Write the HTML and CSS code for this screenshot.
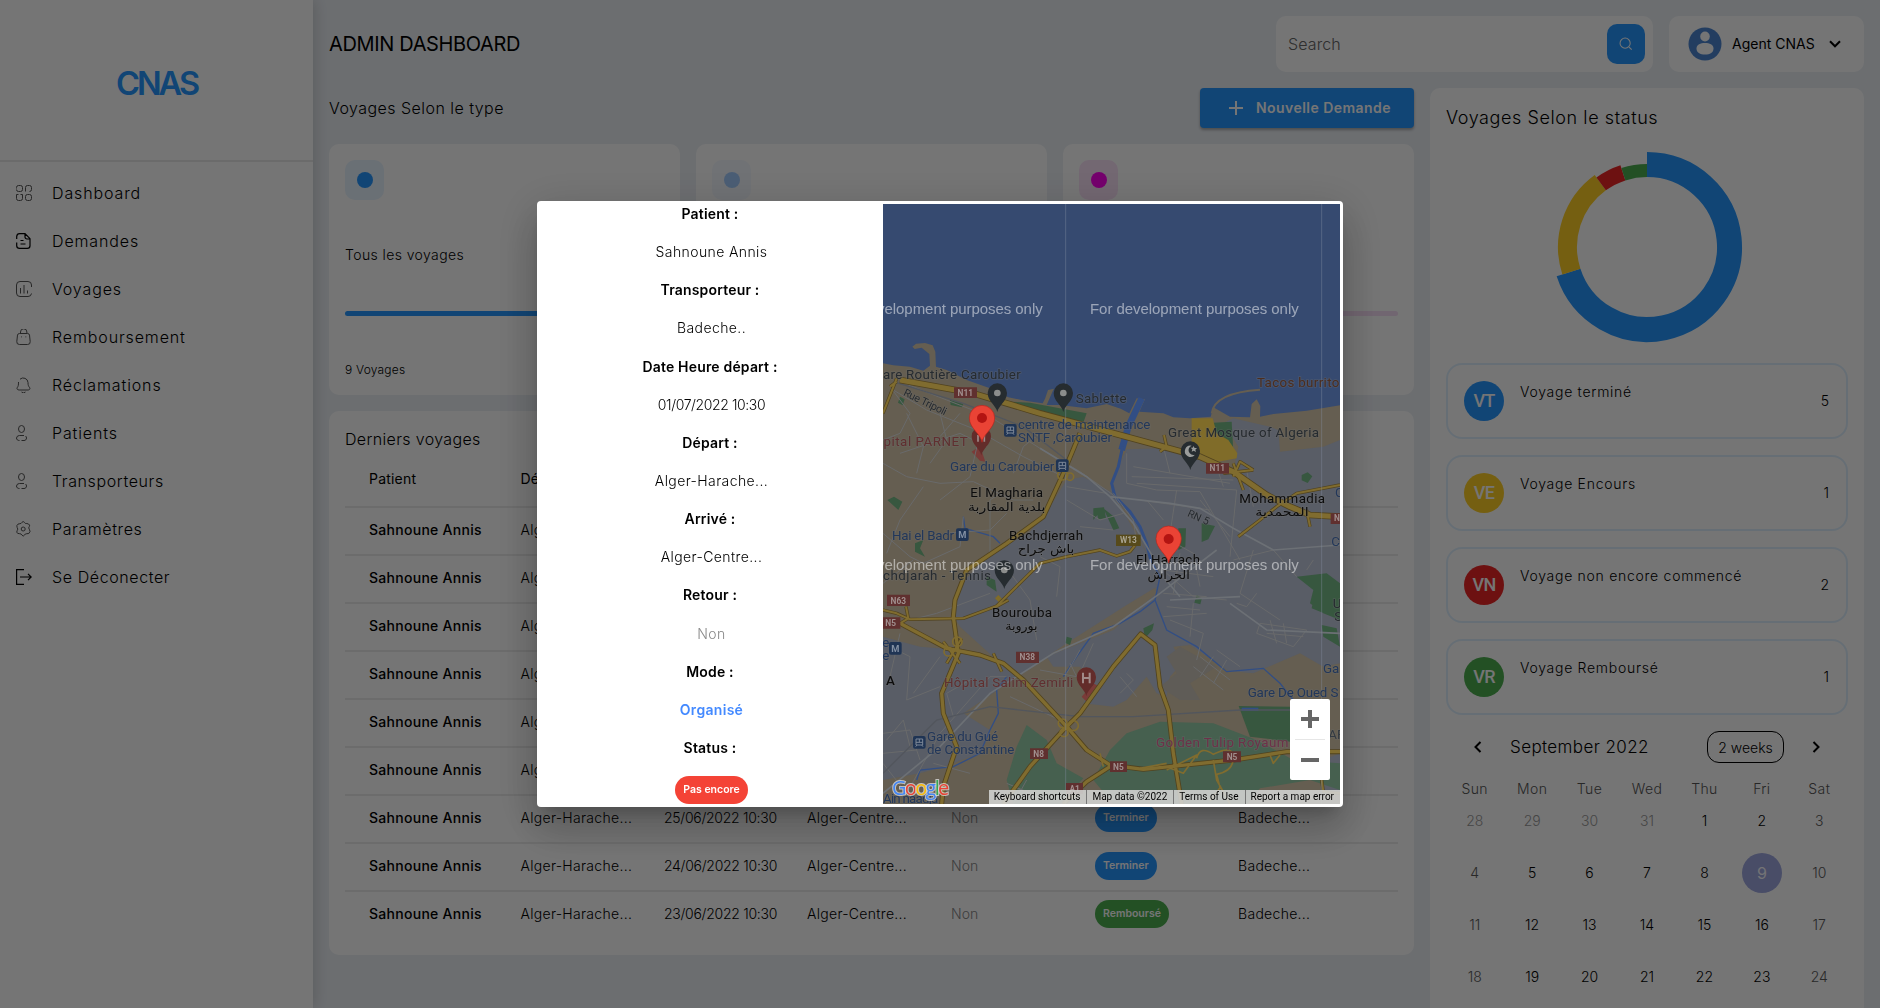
FILE: index.html
```html
<!DOCTYPE html>
<html lang="fr">
<head>
<meta charset="utf-8">
<title>CNAS</title>
<link rel="stylesheet" href="styles.css">
</head>
<body>
<div class="app">
  <aside class="sidebar">
    <div class="brand"><span>CNAS</span></div>
    <nav class="menu">
      <a><svg viewBox="0 0 16 16"><path d="M.5 3.5v-1a2 2 0 0 1 2-2h2a2 2 0 0 1 2 2v2a2 2 0 0 1-2 2h-2a2 2 0 0 1-2-2M9.500 6.500v-4a2 2 0 0 1 2-2h2a2 2 0 0 1 2 2v2a2 2 0 0 1-2 2M2.500 9.500h-2v4a2 2 0 0 0 2 2h2a2 2 0 0 0 2-2v-4h-2M11.500 9.500h2a2 2 0 0 1 2 2v2a2 2 0 0 1-2 2h-2a2 2 0 0 1-2-2v-2a2 2 0 0 1 2-2"/></svg><span>Dashboard</span></a>
      <a><svg class="strong" viewBox="0 0 16 16"><path d="M.7 6V3.500a3 3 0 0 1 3-2.800H9l5 5v7a2.700 2.700 0 0 1-2.700 2.700H3.500A2.800 2.800 0 0 1 .7 12.700V9.500M9 1v3a2 2 0 0 0 2 2h3M4.500 7.500h3M4.500 11h5"/></svg><span>Demandes</span></a>
      <a><svg viewBox="0 0 16 16"><path d="M15.500 6V4A3.500 3.500 0 0 0 12 .5H4A3.500 3.500 0 0 0 .5 4v8A3.500 3.500 0 0 0 4 15.500h8a3.500 3.500 0 0 0 3.500-3M4.500 7v5.500M8 4v8.500M11.500 9.500v3"/></svg><span>Voyages</span></a>
      <a><svg viewBox="0 0 16 16"><path d="M4.500 4V3a3.200 3.200 0 0 1 6.400 0v1M3.500 4.500h8a2 2 0 0 1 2 1.600l.7 6.400a2.700 2.700 0 0 1-2.700 3h-8a2.700 2.700 0 0 1-2.700-3L1.500 6.100a2 2 0 0 1 2-1.600M5.500 7.500v.8M9.800 7.500v.8"/></svg><span>Remboursement</span></a>
      <a><svg viewBox="0 0 16 16"><path d="M4 2.200A4.800 4.800 0 0 1 12 5.500c0 3 .6 3.800 1.700 5.200.7 1-.2 2.300-1.500 2.300h-9C1.500 13 .5 11.800 1.200 10.700 2.400 9 2.500 8 2.500 5M5.500 15a3 3 0 0 0 4 0"/></svg><span>Réclamations</span></a>
      <a><svg viewBox="0 0 16 16"><ellipse cx="5.500" cy="4" rx="3" ry="3.500"/><path d="M8 10.500h-4.500a3 3 0 0 0-3 2.500c0 1.500 1 2.500 3 2.500M5.500 15.500h2.500c1.500 0 2.500-1 2.500-2.500a2.500 2.500 0 0 0-1-2"/></svg><span>Patients</span></a>
      <a class="tight"><svg viewBox="0 0 16 16"><ellipse cx="5.500" cy="4" rx="3" ry="3.500"/><path d="M8 10.500h-4.500a3 3 0 0 0-3 2.500c0 1.500 1 2.500 3 2.500M5.500 15.500h2.500c1.500 0 2.500-1 2.500-2.500a2.500 2.500 0 0 0-1-2"/></svg><span>Transporteurs</span></a>
      <a class="tight"><svg viewBox="0 0 16 16"><circle cx="7.200" cy="8" r="2"/><path d="M5.800 1.500Q7.200-.5 8.600 1.500q.6 1.500 2.200 1L12.500 3q1.800 1 .8 2.600-1.200 1.300 0 2.600 1.800 2.300-.5 4.300l-2 .2q-1.600-.2-2.200 1.300-1.400 2.200-2.800 0-.6-1.500-2.200-1.300l-1.900-.3Q0 11.200 1.200 9.600q1.200-1.500 0-3-1.200-2 .8-3.500l1.800-.4q1.500 0 2-1.200"/></svg><span>Paramètres</span></a>
      <a class="tight"><svg class="strong" viewBox="0 0 16 16"><path d="M8 .6H.6v14.800H8M4 8h11M12 4.800 15.200 8 12 11.200"/></svg><span>Se Déconecter</span></a>
    </nav>
  </aside>

  <main class="main">
    <header class="topbar">
      <h1>ADMIN DASHBOARD</h1>
      <div class="search"><span>Search</span>
        <div class="search-btn"><svg viewBox="0 0 16 16"><circle cx="7" cy="7" r="5.800"/><path d="m11.500 11.500 3 3"/></svg></div>
      </div>
      <div class="profile">
        <svg class="avatar" viewBox="0 0 34 34"><circle cx="17" cy="17" r="16.500" fill="#4c86d2"/><ellipse cx="17" cy="9.500" rx="4.800" ry="5" fill="#fff"/><path d="M8.500 21.500c0-4 4-5.500 8.500-5.500s8.500 1.500 8.500 5.500-3.500 6-8.500 6-8.500-2-8.500-6z" fill="#fff"/></svg>
        <span>Agent CNAS</span>
        <svg class="chev" viewBox="0 0 12 8"><path d="M1 1.300 6 6.300l5-5"/></svg>
      </div>
    </header>

    <div class="columns">
      <section class="left">
        <div class="section-head">
          <h2>Voyages Selon le type</h2>
          <div class="new-btn"><svg viewBox="0 0 14 14"><path d="M7 0v14M0 7h14"/></svg><span>Nouvelle Demande</span></div>
        </div>
        <div class="types">
          <article class="type blue"><i class="tile"></i><h3>Tous les voyages</h3><div class="bar"></div><p>9 Voyages</p></article>
          <article class="type sky"><i class="tile"></i><div class="bar"></div></article>
          <article class="type pink"><i class="tile"></i><div class="bar"></div></article>
        </div>
        <div class="table">
          <h2>Derniers voyages</h2>
          <div class="row head"><span>Patient</span><span>Départ</span><span>Date</span><span>Arrivé</span><span>Retour</span><span>Status</span><span>Transporteur</span></div>
          <div class="row"><b>Sahnoune Annis</b><span>Alger-Harache...</span><span class="date">01/07/2022 10:30</span><span>Alger-Centre...</span><span class="no">Non</span><em>Terminer</em><span>Badeche...</span></div>
          <div class="row"><b>Sahnoune Annis</b><span>Alger-Harache...</span><span class="date">30/06/2022 10:30</span><span>Alger-Centre...</span><span class="no">Non</span><em>Terminer</em><span>Badeche...</span></div>
          <div class="row"><b>Sahnoune Annis</b><span>Alger-Harache...</span><span class="date">29/06/2022 10:30</span><span>Alger-Centre...</span><span class="no">Non</span><em>Terminer</em><span>Badeche...</span></div>
          <div class="row"><b>Sahnoune Annis</b><span>Alger-Harache...</span><span class="date">28/06/2022 10:30</span><span>Alger-Centre...</span><span class="no">Non</span><em>Terminer</em><span>Badeche...</span></div>
          <div class="row"><b>Sahnoune Annis</b><span>Alger-Harache...</span><span class="date">27/06/2022 10:30</span><span>Alger-Centre...</span><span class="no">Non</span><em>Terminer</em><span>Badeche...</span></div>
          <div class="row"><b>Sahnoune Annis</b><span>Alger-Harache...</span><span class="date">26/06/2022 10:30</span><span>Alger-Centre...</span><span class="no">Non</span><em>Terminer</em><span>Badeche...</span></div>
          <div class="row"><b>Sahnoune Annis</b><span>Alger-Harache...</span><span class="date">25/06/2022 10:30</span><span>Alger-Centre...</span><span class="no">Non</span><em>Terminer</em><span>Badeche...</span></div>
          <div class="row"><b>Sahnoune Annis</b><span>Alger-Harache...</span><span class="date">24/06/2022 10:30</span><span>Alger-Centre...</span><span class="no">Non</span><em>Terminer</em><span>Badeche...</span></div>
          <div class="row"><b>Sahnoune Annis</b><span>Alger-Harache...</span><span class="date">23/06/2022 10:30</span><span>Alger-Centre...</span><span class="no">Non</span><em class="green">Remboursé</em><span>Badeche...</span></div>
        </div>
      </section>

      <section class="right">
        <h2>Voyages Selon le status</h2>
        <svg class="donut" viewBox="-100 -100 200 200" fill="none">
          <path stroke="#2697ff" stroke-width="25" d="M0-82.500A82.500 82.500 0 1 1-78.460 25.490"/>
          <path stroke="#ffcf26" stroke-width="19" d="M-75.610 24.570A79.500 79.500 0 0 1-46.730-64.320"/>
          <path stroke="#ee2727" stroke-width="16" d="M-45.840-63.100A78 78 0 0 1-24.100-74.180"/>
          <path stroke="#4caf50" stroke-width="13" d="M-23.640-72.760A76.500 76.500 0 0 1 0-76.500"/>
        </svg>
        <div class="stat"><i class="c1">VT</i><span>Voyage terminé</span><b>5</b></div>
        <div class="stat"><i class="c2">VE</i><span>Voyage Encours</span><b>1</b></div>
        <div class="stat"><i class="c3">VN</i><span>Voyage non encore commencé</span><b>2</b></div>
        <div class="stat"><i class="c4">VR</i><span>Voyage Remboursé</span><b>1</b></div>
        <div class="cal-head">
          <svg viewBox="0 0 8 12"><path d="M6.500 1 1.500 6l5 5"/></svg>
          <span>September 2022</span>
          <button>2 weeks</button>
          <svg viewBox="0 0 8 12"><path d="m1.500 1 5 5-5 5"/></svg>
        </div>
        <div class="week days"><span>Sun</span><span>Mon</span><span>Tue</span><span>Wed</span><span>Thu</span><span>Fri</span><span>Sat</span></div>
        <div class="week first"><s>28</s><s>29</s><s>30</s><s>31</s><span>1</span><span>2</span><u>3</u></div>
        <div class="week"><u>4</u><span>5</span><span>6</span><span>7</span><span>8</span><span class="today">9</span><u>10</u></div>
        <div class="week"><u>11</u><span>12</span><span>13</span><span>14</span><span>15</span><span>16</span><u>17</u></div>
        <div class="week"><u>18</u><span>19</span><span>20</span><span>21</span><span>22</span><span>23</span><u>24</u></div>
      </section>
    </div>
  </main>
</div>

<div class="overlay">
  <div class="modal">
    <div class="details">
      <b>Patient :</b><span>Sahnoune Annis</span>
      <b>Transporteur :</b><span>Badeche..</span>
      <b>Date Heure départ :</b><span class="date">01/07/2022 10:30</span>
      <b>Départ :</b><span>Alger-Harache...</span>
      <b>Arrivé :</b><span>Alger-Centre...</span>
      <b>Retour :</b><span class="no">Non</span>
      <b>Mode :</b><span class="mode">Organisé</span>
      <b>Status :</b><em>Pas encore</em>
    </div>
    <div class="map">
      <!-- Map canvas: three units per pixel -->
      <svg viewBox="9 12 1371 1800">
        <defs>
          <g id="pin"><path d="M0 0C-3-25-38-42-38-73a38 38 0 0 1 76 0C38-42 3-25 0 0z"/></g>
          <g id="poi"><path d="M0 0C-4-20-29-32-29-57a29 29 0 0 1 58 0C29-32 4-20 0 0z"/></g>
          <g id="train"><rect x="-19" y="-19" width="38" height="38" rx="6" fill="#1f3454"/><path d="M-10-10h20v18h-20zM-10 0h20M0-10v10M-7 8l-4 5M7 8l4 5" fill="none" stroke="#7c8797" stroke-width="3"/></g>
        </defs>
        <rect x="9" y="12" width="1371" height="1800" fill="#364a70"/>
        <path fill="#655e51" d="M9 490 40 496 90 500 130 512 150 497 148 462 125 443 104 447 97 440 108 431 135 429 158 436 166 455 168 500 200 510 260 540 330 565 385 592 440 603 488 610 495 596 504 570 522 566 518 574 500 615 540 615 620 625 680 612 722 626 748 640 770 595 795 598 778 635 850 640 880 652 930 655 992 650 1000 622 1050 650 1110 652 1115 612 1130 598 1141 618 1140 650 1180 642 1280 632 1380 616V1812H9z"/>
        <path d="M995 640q8-62 145-71" fill="none" stroke="#655e51" stroke-width="6"/>
        <g fill="#595d66">
          <path d="M740 748 850 745 990 790 1060 815 1075 740 1030 670 1060 655 1170 680 1195 690 1200 755 1330 740 1380 720V1390L1330 1400 1260 1360 1190 1390 1120 1420 1045 1412 930 1335 880 1340 905 1390 870 1430 860 1490 830 1480 800 1430 740 1500 700 1520 610 1510 640 1450 600 1400 520 1400 500 1370 700 1290 830 1180 800 1060 750 950 690 870 715 800z"/>
          <path d="M560 840 610 830 700 880 800 1060 830 1160 740 1215 560 1330 250 1540 330 1590 300 1660 190 1700 120 1720 9 1740V1310L120 1340 240 1350 350 1380 240 1280 215 1240 245 1150 330 1060 450 995 510 920z"/>
          <path d="M900 1340 860 1370 890 1420 840 1460 900 1500 960 1500 930 1450 1010 1400z" fill="#5f5c57"/>
          <path d="M1330 1680 1380 1660V1780H1320z"/>
        </g>
        <g fill="#46604f">
          <path d="M440 1575 500 1620 530 1690 610 1735 540 1812H400L380 1740 410 1640z"/>
          <path d="M690 1650 740 1600 840 1565 1000 1570 1130 1620 1240 1680 1380 1690V1770L1290 1740 1140 1765 1100 1812H700L640 1740z"/>
          <path d="M1076 1518 1230 1520 1232 1625 1110 1610z" fill="#37573f"/>
        </g>
        <g fill="#37573f">
          <path d="M385 605 450 608 620 640 605 682 520 650z"/><path d="M210 600 250 612 246 622 212 615zM60 590l14 8-6 18-14-8z"/>
          <path d="M1000 668 1055 665 1060 755 1020 750z"/><path d="M640 925 672 922 678 955 655 958 652 945 640 960zM670 925 702 950 718 985 700 990z"/>
          <path d="M895 985 918 985 916 1040 895 1050zM965 970l40 8-20 40-20 8z"/><path d="M22 900l20-10 25 15-12 25zM105 1030l25-10-10 25 15 25-30-15z"/>
          <path d="M320 1130 345 1140 350 1175 320 1155zM950 1185l16 8-5 20-18-5zM560 1310l16 5-6 20-14-6zM790 1285l32-15-5 20-22 25z"/>
          <path d="M1250 1130 1340 1120 1380 1150V1260L1330 1240 1290 1210 1300 1170zM1300 1200l60 15-15 30-50-20zM1325 1275 1370 1285 1380 1340 1330 1310z"/>
          <path d="M1265 825l18-8 14 12-14 20-18-8z"/>
        </g>
        <path fill="#806c29" d="M935 655 998 655 1010 700 1045 720 1072 760 1070 775 990 790 960 760 935 745zM345 1195l10-10 18 18-8 12z"/>
        <path fill="#7a3b38" d="M275 755 300 738 316 785 300 782zM605 1490 640 1450 655 1458 620 1505z"/>
        <!-- Rivers -->
        <g fill="none" stroke="#324e84">
          <path stroke-width="20" d="M785 595 745 680 725 750"/>
          <path stroke-width="9" d="M728 740 715 800 695 850 705 890 750 935 780 980 800 1030 812 1080"/>
          <path stroke-width="4" d="M812 1080 840 1130 825 1200 780 1235 720 1270 640 1300 590 1370 550 1430M825 1200 860 1290 950 1340 1040 1415 1150 1405 1200 1450 1240 1500M380 1430 350 1470 355 1540 330 1590 300 1660 220 1700 120 1710 110 1740M250 950 255 985 340 1010 360 1030"/>
          <path stroke-width="10" d="M1085 1528h50"/>
        </g>
        <!-- Side streets -->
        <g fill="none" stroke="#696a6b" stroke-width="3">
          <path d="M30 560 90 640 60 700 9 720M60 545 200 600 330 650 480 745 600 815M40 570 140 630 290 690 430 770 550 830M9 790 80 830 180 850 280 845 400 900 460 900M80 640 130 740 110 820M180 640 200 720 150 790M60 760 240 700 320 740M9 1000 90 1070 130 1090 240 1040 250 950M130 860 60 960 20 1060M200 1000 330 990 380 940M330 1060 330 900 360 880M400 820 430 740 480 700M240 640 180 710M300 700 270 830 180 900M90 1260 170 1240 330 1180M9 1150 100 1080M370 1090 450 1200 470 1320M560 900 660 960 730 940M600 980 700 990M480 1070 540 1100 530 1190M700 880 760 960 770 1030M600 815 700 885 740 950M560 860 680 880"/>
          <path d="M740 760 740 850 830 870 960 875 1080 1080M755 830 1060 840M760 800 1050 850M770 850 1070 870 1050 1070M850 740 870 820M960 900 1050 1010M780 900 990 930M890 870 870 1000M800 900 850 960M1100 810 1120 920M1010 800 1030 860M850 1010 940 1060M860 1120 940 1190 1040 1200M850 1180 980 1190M850 1110 1000 1130M940 1060 960 1160M900 1060 880 1180M1120 1050 1080 1180 1200 1260M1060 1080 1180 1050 1250 1130M1300 1080 1280 1110M870 1260 970 1300 950 1380M850 1250 980 1240M860 1220 960 1230M940 1210 930 1310M1140 1270 1280 1290 1240 1340 1130 1300zM1170 1260 1190 1330M1210 1270 1220 1330M1160 1300 1270 1310M1010 1350 1080 1400M960 1370 1050 1440M940 1400 1030 1470M1000 1370 960 1430M1040 1380 1000 1450M1070 1210 1100 1220 1130 1180M720 1430 770 1490M720 1480 760 1440 740 1420M600 1350 560 1420M640 1330 600 1420M480 1410 590 1430M570 1390 590 1430"/>
          <path d="M9 1330 90 1370 80 1500 180 1460M60 1300 30 1430M180 1370 100 1480M240 1350 120 1310M270 1440 200 1480 220 1550M9 1600 90 1590 120 1680M20 1620 70 1560 90 1640M9 1660 110 1650M9 1690 80 1780 180 1600 330 1430 380 1430M160 1690 270 1720M390 1490 540 1560M380 1750 500 1800M440 1740 400 1812M400 1760 470 1790"/>
        </g>
        <g fill="none" stroke="#6c7075" stroke-width="5">
          <path d="M480 745 620 830 690 890 870 910 960 925 1060 985 1180 1050 1380 1035M690 890 760 970 830 1090 850 1130 900 1190M9 1780 180 1640 330 1480 520 1360 700 1280 840 1180 1010 1050M870 1200 1080 1190M1050 1210 1160 1290 1380 1300"/>
        </g>
        <g fill="none" stroke="#52565d" stroke-width="4"><path d="M40 545 250 610 430 680 560 780M9 1720 170 1560 330 1520 600 1550 760 1550 1080 1530 1230 1530"/></g>
        <!-- Main roads -->
        <g fill="none" stroke-linejoin="round">
          <g stroke="#51431f">
            <path stroke-width="20" d="M60 540 280 580 480 640 720 705 960 770 1060 815 1160 885 1230 920 1290 945 1380 950"/>
            <path stroke-width="15" d="M600 700 550 820 490 950 380 1030 260 1110 225 1200 220 1250 235 1360 185 1480 190 1540 230 1640 190 1760 185 1812M60 1270 200 1345 300 1365 370 1390 430 1440 560 1580 620 1650 690 1695 790 1708 1060 1680 1220 1655 1380 1655M370 1812 450 1700 550 1590 600 1540 700 1400 782 1302 825 1335 840 1460 865 1530 880 1660 905 1812M550 1812 620 1745 690 1700"/>
            <path stroke-width="10" d="M9 1230 50 1240 90 1258 250 1255 350 1218 480 1090 560 1070 660 1050 710 1068 750 1055 770 1030M1075 1010 1140 960 1190 920 1250 880 1380 855M50 535 9 640M30 560 50 545M840 755 860 740 852 705M340 1360 365 1415M60 1270 85 1255 78 1220M1280 930 1290 980M340 1225 385 1200M1325 1740 1330 1775 1380 1780M190 1325 240 1390M245 1315 200 1390M1060 790 1090 870M1030 820 1120 810M1060 830 1080 785 1120 810"/>
          </g>
          <g stroke="#806c2f">
            <path stroke-width="15" d="M60 540 280 580 480 640 720 705 960 770 1060 815 1160 885 1230 920 1290 945 1380 950"/>
            <path stroke-width="10" d="M600 700 550 820 490 950 380 1030 260 1110 225 1200 220 1250 235 1360 185 1480 190 1540 230 1640 190 1760 185 1812M60 1270 200 1345 300 1365 370 1390 430 1440 560 1580 620 1650 690 1695 790 1708 1060 1680 1220 1655 1380 1655M370 1812 450 1700 550 1590 600 1540 700 1400 782 1302 825 1335 840 1460 865 1530 880 1660 905 1812M550 1812 620 1745 690 1700"/>
            <path stroke-width="6" d="M9 1230 50 1240 90 1258 250 1255 350 1218 480 1090 560 1070 660 1050 710 1068 750 1055 770 1030M1075 1010 1140 960 1190 920 1250 880 1380 855M50 535 9 640M30 560 50 545M840 755 860 740 852 705M340 1360 365 1415M60 1270 85 1255 78 1220M1280 930 1290 980M340 1225 385 1200M1325 1740 1330 1775 1380 1780M190 1325 240 1390M245 1315 200 1390M1060 790 1090 870M1030 820 1120 810M1060 830 1080 785 1120 810"/>
            <g stroke-width="5"><circle cx="548" cy="825" r="15"/><circle cx="570" cy="830" r="11"/><circle cx="548" cy="1570" r="13"/><circle cx="580" cy="1577" r="15"/><circle cx="552" cy="1598" r="12"/><circle cx="232" cy="1325" r="14"/><circle cx="205" cy="1355" r="13"/><path d="M950 1675q10-40 50-12 60-30 60 10t-50 50l10 40-30 40M1000 1680 1010 1740 1050 1812M860 1710 950 1665 910 1720 860 1700M1170 1665l10 25 20-25M780 1705 860 1690M660 1660l10 40"/></g>
          </g>
        </g>
        <path d="M557 12V1812M1325 12V1812" stroke="#8690a5" stroke-opacity=".4" stroke-width="3"/>
        <!-- Road shields -->
        <g class="shield">
          <path fill="#60302f" d="M222 562h69v32h-69zM978 789h69v32h-69zM21 1184h69v34H21zM9 1252h52v34H9zM408 1355h69v34h-69zM450 1645h54v32h-54zM690 1684h51v32h-51zM1029 1654h54v33h-54zM558 1749h51v33h-51zM1352 940h28v32h-28z"/>
          <path fill="#574a1b" d="M708 1004h74v34h-74z"/>
          <text x="256" y="587">N11</text><text x="1012" y="814">N11</text><text x="55" y="1211">N63</text><text x="32" y="1278">N5</text><text x="442" y="1381">N38</text><text x="476" y="1671">N8</text><text x="715" y="1709">N5</text><text x="1056" y="1680">N5</text><text x="584" y="1777">A1</text><text x="1371" y="964">N</text><text x="745" y="1030" class="w13">W13</text>
        </g>
        <!-- Places -->
        <g class="lbl">
          <text x="9" y="537" textLength="413">are Routière Caroubier</text>
          <text x="587" y="609" textLength="153">Sablette</text>
          <text x="864" y="712" textLength="453">Great Mosque of Algeria</text>
          <text x="9" y="1140" textLength="324">chdjarah - Tennis</text>
          <text x="68" y="585" class="road" transform="rotate(26 68 585)" textLength="140">Rue Tripoli</text>
          <text x="920" y="948" class="road" transform="rotate(24 920 948)" textLength="68">RN 5</text>
          <text x="1358" y="1224">U</text><text x="1363" y="1262">S</text>
          <g fill="#4c2d1e"><text x="1131" y="561" textLength="247">Tacos burrito</text></g>
        </g>
        <g class="lbl transit">
          <text x="414" y="686" textLength="397">centre de maintenance</text><text x="414" y="725" textLength="282">SNTF ,Caroubier</text>
          <text x="210" y="812" textLength="313">Gare du Caroubier</text>
          <text x="36" y="1019" textLength="186">Hai el Badr</text>
          <text x="141" y="1622" textLength="213">Gare du Gué</text><text x="141" y="1661" textLength="262">de Constantine</text>
          <text x="1103" y="1490" textLength="272">Gare De Oued S</text><text x="1329" y="1418">Ga</text>
          <text x="9" y="1809" textLength="166">Ain naadja</text><text x="7" y="1342">e</text><text x="7" y="1380">e</text><text x="1365" y="890">C</text><text x="1354" y="1037">C</text>
        </g>
        <g class="lbl med">
          <text x="-14" y="737" textLength="277">ôpital PARNET</text>
          <text x="192" y="1461" textLength="388">Hôpital Salim Zemirli</text>
          <text x="828" y="1641" textLength="397" fill="#6d3149">Golden Tulip Royaum</text>
        </g>
        <g class="lbl city">
          <text x="271" y="891" textLength="218">El Magharia</text><text class="ar" x="380" y="932" textLength="232" lengthAdjust="spacingAndGlyphs">بلدية المقاربة</text>
          <text x="387" y="1020" textLength="222">Bachdjerrah</text><text class="ar" x="498" y="1060" textLength="170" lengthAdjust="spacingAndGlyphs">باش جراح</text>
          <text x="1078" y="909" textLength="257">Mohammadia</text><text class="ar" x="1206" y="948" textLength="160" lengthAdjust="spacingAndGlyphs">المحمدية</text>
          <text x="768" y="1092" textLength="192">El Harrach</text><text class="ar" x="866" y="1136" textLength="127" lengthAdjust="spacingAndGlyphs">الحراش</text>
          <text x="336" y="1251" textLength="180">Bourouba</text><text class="ar" x="424" y="1290" textLength="97" lengthAdjust="spacingAndGlyphs">بوروبة</text>
          <text x="18" y="1455" font-weight="500">A</text><text x="1345" y="1616" fill="#333a42">AR</text>
        </g>
        <!-- Place pins -->
        <g fill="#262c30"><use href="#poi" x="352" y="636"/><use href="#poi" x="550" y="636"/><use href="#poi" x="931" y="810"/><use href="#poi" x="373" y="1167"/></g>
        <g fill="#8b8d8c"><circle cx="352" cy="579" r="10"/><circle cx="550" cy="579" r="10"/><circle cx="373" cy="1110" r="10"/></g>
        <path fill="#9a9c9b" d="M935 737a17 17 0 1 0 10 27 14 14 0 1 1-10-27zM940 738l4 6 7 0-5 5 2 7-7-4-6 3 2-7-5-5 6 0z"/>
        <g fill="#632c2a"><use href="#poi" x="304" y="766"/><use href="#poi" x="619" y="1488"/></g>
        <path d="M609 1418v32M629 1418v32M609 1434h20" stroke="#a08a88" stroke-width="6"/><path d="M294 705v20M313 705v20" stroke="#a08a88" stroke-width="5"/>
        <use href="#train" x="391" y="691"/><use href="#train" x="547" y="797"/><use href="#train" x="118" y="1627"/>
        <g class="metro"><rect x="228" y="985" width="38" height="38" rx="6"/><rect x="27" y="1326" width="38" height="38" rx="6"/><text x="247" y="1014">M</text><text x="46" y="1355">M</text></g>
        <!-- Trip markers -->
        <g fill="#ea4335" stroke="#b3261e" stroke-width="2"><use href="#pin" x="306" y="727"/><use href="#pin" x="866" y="1089"/></g>
        <g fill="#b31412"><circle cx="306" cy="654" r="15"/><circle cx="866" cy="1017" r="15"/></g>
        <g class="water">
          <text x="-138" y="343" textLength="626">For development purposes only</text><text x="630" y="343" textLength="626">For development purposes only</text>
          <text x="-138" y="1111" textLength="626">For development purposes only</text><text x="630" y="1111" textLength="626">For development purposes only</text>
        </g>
        <text class="google" x="36" y="1786" textLength="172"><tspan fill="#4285f4">G</tspan><tspan fill="#ea4335">o</tspan><tspan fill="#fbbc04">o</tspan><tspan fill="#4285f4">g</tspan><tspan fill="#34a853">l</tspan><tspan fill="#ea4335">e</tspan></text>
      </svg>
      <div class="zoom"><svg viewBox="0 0 18 18"><path d="M9 0v18M0 9h18"/></svg><hr><svg viewBox="0 0 18 18"><path d="M0 9h18"/></svg></div>
      <div class="legal"><span>Keyboard shortcuts</span><span>Map data ©2022</span><span>Terms of Use</span><span>Report a map error</span></div>
    </div>
  </div>
</div>
</body>
</html>
```
FILE: styles.css
```css
* { box-sizing: border-box; }
body {
  margin: 0;
  width: 1880px;
  height: 1008px;
  overflow: hidden;
  background: #ecf0f5;
  color: #000;
  font: 300 14px/20px Inter, sans-serif;
}
h1, h2, h3, p { margin: 0; font-weight: 300; }
b, i, em, s, u { font-style: normal; text-decoration: none; }
svg { display: block; flex: none; }

.app { display: flex; height: 1008px; }

/* Sidebar */
.sidebar { width: 313px; flex: none; background: #fff; box-shadow: 2px 0 14px rgba(0, 0, 0, .16); position: relative; }
.brand {
  height: 162px;
  padding-top: 8px;
  display: flex;
  align-items: center;
  justify-content: center;
  border-bottom: 2px solid #e9e9e9;
  color: #2697ff;
  font-size: 32.500px;
  font-weight: 600;
  letter-spacing: -3px;
}
.menu { padding-top: 7px; }
.menu a { display: flex; align-items: center; gap: 20px; height: 48px; padding-left: 16px; font-size: 16px; letter-spacing: .87px; }
.menu a.tight { letter-spacing: .6px; }
.menu svg { width: 16px; height: 16px; fill: none; stroke: #555; stroke-width: 1; }
.menu svg.strong { stroke: #000; stroke-width: 1.2; }

/* Top bar */
.main { flex: 1; padding: 16px; }
.topbar { display: flex; height: 56px; align-items: center; }
.topbar h1 { flex: 1; font-size: 20px; font-weight: 400; letter-spacing: -.35px; }
.search, .profile { height: 56px; background: #fff; border-radius: 10px; display: flex; align-items: center; }
.search { width: 377px; padding: 0 8px 0 12px; justify-content: space-between; font-size: 16px; letter-spacing: .1px; color: #666; margin-right: 16px; }
.search-btn { width: 38px; height: 40px; border-radius: 10px; background: #2697ff; display: grid; place-items: center; }
.search-btn svg { width: 14px; height: 14px; fill: none; stroke: #fff; stroke-width: 1.2; }
.profile { width: 195px; padding-left: 19px; font-weight: 400; }
.avatar { width: 34px; height: 34px; margin-right: 10px; }
.profile span { width: 97px; }
.chev { width: 12px; height: 8px; fill: none; stroke: #000; stroke-width: 2; }

.columns { display: flex; gap: 16px; margin-top: 16px; }
.left { flex: 1; }

/* Trip types */
.section-head { height: 40px; display: flex; justify-content: space-between; align-items: center; }
.section-head h2, .table h2 { font-size: 16px; letter-spacing: .46px; }
.new-btn { width: 214px; height: 40px; border-radius: 4px; background: #2697ff; box-shadow: 0 2px 3px rgba(0, 0, 0, .3); color: #fff; display: flex; align-items: center; padding-left: 29px; gap: 13px; font-weight: 600; font-size: 14px; letter-spacing: .45px; }
.new-btn svg { width: 14px; height: 14px; stroke: #fff; stroke-width: 2; }
.types { display: grid; grid-template-columns: repeat(3, 1fr); gap: 16px; margin-top: 16px; }
.type { height: 251px; padding: 16px; border-radius: 10px; background: #fff; }
.tile { display: grid; place-items: center; width: 39px; height: 40px; border-radius: 10px; }
.tile::before { content: ""; width: 16px; height: 16px; border-radius: 50%; }
.type h3 { margin-top: 45px; font-size: 14px; letter-spacing: .4px; }
.bar { height: 5px; border-radius: 5px; margin: 46px 0 44px; }
.tile + .bar { margin-top: 111px; }
.type p { font-size: 12px; letter-spacing: .2px; }
.blue .tile { background: #e6f3ff; }
.blue .tile::before, .blue .bar { background: #2697ff; }
.sky .tile { background: #f4f8fe; }
.sky .tile::before, .sky .bar { background: #a4cdff; }
.pink .tile { background: #fbe2f9; }
.pink .tile::before { background: #f0e; }
.pink .bar { background: #f7def6; }

/* Latest trips */
.table { margin-top: 16px; height: 543.500px; padding: 16px; border-radius: 10px; background: #fff; }
.table h2 { height: 24px; line-height: 24px; letter-spacing: .35px; }
.row { display: grid; grid-template-columns: 151.500px 143.500px 143px 144px 144px 143px 1fr; align-items: center; height: 48px; padding: 0 0 3px 24px; border-top: 2px solid #ececec; letter-spacing: .3px; }
.row.head { height: 55px; padding-bottom: 0; border: 0; font-weight: 400; letter-spacing: .2px; }
.row b { font-weight: 500; letter-spacing: .28px; }
.row .date { letter-spacing: -.28px; }
.no { color: #888; letter-spacing: 0; }
.row em, .details em { justify-self: start; height: 28px; line-height: 28px; padding: 0 8px; border-radius: 14px; background: #2697ff; color: #fff; font-size: 10.500px; font-weight: 600; letter-spacing: 0; }
.row em.green { background: #4caf50; }

/* Status panel */
.right { width: 434px; height: 940px; padding: 16px; border-radius: 10px; background: #fff; }
.right h2 { height: 27px; line-height: 27px; font-size: 18px; letter-spacing: .58px; }
.donut { width: 200px; height: 200px; margin: 16px auto 16px; }
.stat { display: flex; height: 76px; margin-bottom: 16px; padding: 0 17px 0 16px; border: 2px solid rgba(38, 151, 255, .15); border-radius: 16px; align-items: center; }
.stat i { width: 40px; height: 40px; border-radius: 50%; color: #fff; text-align: center; font: 500 18px/40px Roboto, sans-serif; letter-spacing: -.7px; }
.stat span { flex: 1; margin: -18px 0 0 16px; letter-spacing: .72px; }
.stat b { font-weight: 300; }
.c1 { background: #2697ff; }
.c2 { background: #ffcf26; }
.c3 { background: #ee2727; }
.c4 { background: #4caf50; }

.cal-head { display: flex; height: 32px; align-items: center; padding: 0 28px; font-size: 17px; letter-spacing: .4px; }
.cal-head svg { width: 8px; height: 12px; fill: none; stroke: #000; stroke-width: 2; }
.cal-head span { flex: 1; padding-left: 28px; }
.cal-head button { width: 77px; height: 32px; margin-right: 28px; padding: 0; border: 1px solid #000; border-radius: 12px; background: none; color: #000; font: 300 14px Inter, sans-serif; }
.week { display: grid; grid-template-columns: repeat(7, 1fr); height: 52px; align-items: center; justify-items: center; }
.week.days { height: 20px; margin-top: 16px; color: #555; letter-spacing: .4px; }
.week.first { margin-top: -4px; }
.week s { color: #999; }
.week u { color: #5a5a5a; }
.week .today { width: 40px; height: 40px; border-radius: 50%; background: #9fa8e0; color: #fafaff; font-size: 16px; line-height: 40px; text-align: center; font-weight: 400; }

/* Trip dialog */
.overlay { position: fixed; inset: 0; display: grid; place-items: center; background: rgba(0, 0, 0, .54); }
.modal {
  width: 806px;
  height: 606px;
  padding: 3px;
  display: flex;
  border-radius: 4px;
  background: #fff;
  box-shadow: 0 11px 15px -7px rgba(0, 0, 0, .2), 0 24px 38px 3px rgba(0, 0, 0, .14), 0 9px 46px 8px rgba(0, 0, 0, .12);
}
.details { width: 343px; padding-right: 3px; display: flex; flex-direction: column; align-items: center; }
.details > * { height: 20px; margin-bottom: 18.150px; }
.details b { font-weight: 600; letter-spacing: .18px; }
.details span { padding-left: 3px; letter-spacing: .4px; }
.details span.date { letter-spacing: -.4px; }
.details .mode { color: #448aff; font-weight: 600; letter-spacing: .3px; }
.details em { height: 28px; margin: 0 0 0 3px; background: #f44336; }
.map { position: relative; width: 457px; height: 600px; overflow: hidden; }
.map > svg { width: 457px; height: 600px; }
.lbl { font: 400 40px Roboto, sans-serif; fill: #262b30; paint-order: stroke; stroke: rgba(110, 110, 110, .35); stroke-width: 5px; }
.lbl .road { font-size: 32px; }
.transit { fill: #22375a; }
.med { fill: #602f30; }
.city { fill: #0c0c0c; }
.city .ar { font: 36px "DejaVu Sans", sans-serif; text-anchor: middle; }
.shield { font: 700 25px Roboto, sans-serif; fill: #a08f8e; text-anchor: middle; }
.shield .w13 { fill: #a9a491; }
.metro { font: 700 28px Roboto, sans-serif; fill: #1f3454; text-anchor: middle; }
.metro text { fill: #8390a3; }
.water { font: 45px "Liberation Sans", sans-serif; fill: rgba(255, 255, 255, .5); }
.google { font: 500 60px "Open Sans", sans-serif; paint-order: stroke; stroke: rgba(225, 225, 225, .75); stroke-width: 6px; }
.zoom { position: absolute; right: 10px; bottom: 24px; width: 40px; height: 81px; border-radius: 2px; background: #fff; display: flex; flex-direction: column; align-items: center; justify-content: space-between; padding: 11px 0; }
.zoom svg { width: 18px; height: 18px; stroke: #666; stroke-width: 4; }
.zoom hr { width: 30px; height: 1px; margin: 0; border: 0; background: #e6e6e6; }
.legal { position: absolute; right: 0; bottom: 0; display: flex; height: 14px; background: rgba(208, 210, 207, .9); font: 10px/13px Roboto, sans-serif; white-space: nowrap; }
.legal span { padding: 0 6px 0 5px; border-left: 1px solid #777; }
.legal span:first-child { border: 0; }
```
